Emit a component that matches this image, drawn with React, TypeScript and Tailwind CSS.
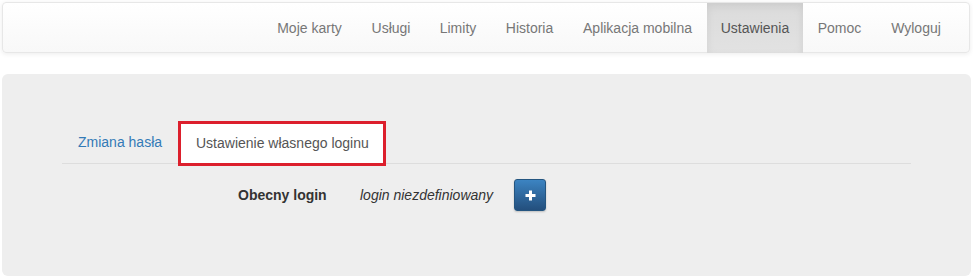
import React from "react";

const navItems: [string, string][] = [
  ["Moje karty", "w-[95px]"],
  ["Usługi", "w-[68px]"],
  ["Limity", "w-[66px]"],
  ["Historia", "w-[77px]"],
  ["Aplikacja mobilna", "w-[139px]"],
  ["Ustawienia", "w-[96px]"],
  ["Pomoc", "w-[73px]"],
  ["Wyloguj", "w-[80px]"],
];

export default function App() {
  return (
    <div className="w-[973px] h-[277px] bg-white text-[14px] leading-[20px] text-[#333]" style={{ fontFamily: '"Liberation Sans", Arial, sans-serif' }}>
      <div className="pt-[2px] pl-[2px] pr-[3px]">
        <div className="h-[51px] border border-[#e7e7e7] rounded-[4px] bg-gradient-to-b from-white to-[#f8f8f8] shadow-[0_1px_5px_rgba(0,0,0,0.08)] flex justify-end pr-[13px]">
          <ul className="flex h-[50px]">
            {navItems.map(([item, w]) => (
              <li key={item}>
                <a
                  className={
                    "block h-[50px] text-center whitespace-nowrap leading-[50px] " +
                    w +
                    " " +
                    (item === "Ustawienia"
                      ? "bg-gradient-to-b from-[#dbdbdb] to-[#e2e2e2] text-[#555] shadow-[inset_0_3px_9px_rgba(0,0,0,0.075)]"
                      : "text-[#777]")
                  }
                >
                  {item}
                </a>
              </li>
            ))}
          </ul>
        </div>
      </div>
      <div className="mt-[21px] ml-[2px] mr-[2px] h-[202px] bg-[#eeeeee] rounded-[6px] px-[60px] pt-[47px]">
        <div className="flex border-b border-[#dddddd] pl-[1px] h-[43px]">
          <a className="block w-[113px] h-[42px] pl-[15px] leading-[42px] mr-[2px] text-[#337ab7] whitespace-nowrap">Zmiana hasła</a>
          <a className="block w-[208px] h-[45px] pl-[15px] leading-[39px] border-[3px] border-[#dc1f2c] bg-white text-[#555] relative whitespace-nowrap">
            Ustawienie własnego loginu
          </a>
        </div>
        <div className="flex items-center mt-[15px] pl-[176px]">
          <span className="font-bold text-[#333] w-[122px]">Obecny login</span>
          <span className="italic text-[#333] w-[154px]">login niezdefiniowany</span>
          <button className="w-[32px] h-[32px] rounded-[3px] border border-[#245580] bg-gradient-to-b from-[#3c84c2] to-[#234f7d] flex items-center justify-center shadow-[0_1px_2px_rgba(0,0,0,0.2)]">
            <svg width="11" height="11" viewBox="0 0 11 11">
              <rect x="4" y="0.5" width="3" height="10" fill="white" />
              <rect x="0.5" y="4" width="10" height="3" fill="white" />
            </svg>
          </button>
        </div>
      </div>
    </div>
  );
}
